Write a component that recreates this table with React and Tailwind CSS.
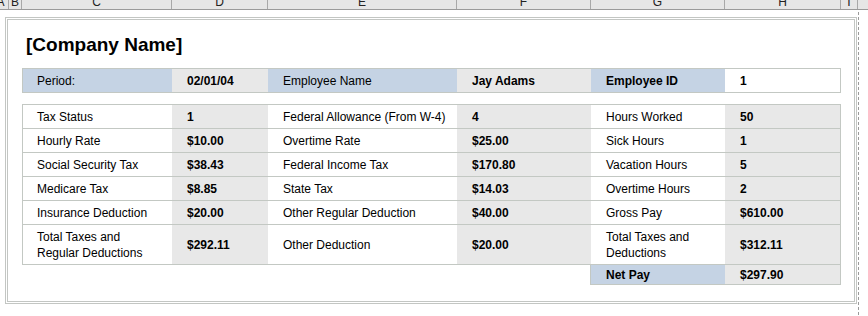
import React from "react";

const headerCols = [
  { l: "A", c: "w-[16px] -ml-[7px]" },
  { l: "B", c: "w-[13px]" },
  { l: "C", c: "w-[150px]" },
  { l: "D", c: "w-[96px]" },
  { l: "E", c: "w-[189px]" },
  { l: "F", c: "w-[134px]" },
  { l: "G", c: "w-[134px]" },
  { l: "H", c: "w-[116px]" },
  { l: "I", c: "w-[17px]" },
  { l: "", c: "flex-1 border-r-0" },
];

const BLUE = "bg-[#c5d3e4]";
const GRAY = "bg-[#e8e8e8]";
const WHITE = "bg-white";

const rows = [
  ["Tax Status", "1", "Federal Allowance (From W-4)", "4", "Hours Worked", "50"],
  ["Hourly Rate", "$10.00", "Overtime Rate", "$25.00", "Sick Hours", "1"],
  ["Social Security Tax", "$38.43", "Federal Income Tax", "$170.80", "Vacation Hours", "5"],
  ["Medicare Tax", "$8.85", "State Tax", "$14.03", "Overtime Hours", "2"],
  ["Insurance Deduction", "$20.00", "Other Regular Deduction", "$40.00", "Gross Pay", "$610.00"],
];

const widths = ["w-[149px]", "w-[96px]", "w-[189px]", "w-[134px]", "w-[134px]", "w-[115px]"];

function Cell({ w, bg, bold, first, children }) {
  return (
    <div
      className={`${w} ${bg} flex items-center ${first ? "pl-[14px]" : "pl-[15px]"} leading-[16px] ${
        bold ? "font-bold" : ""
      }`}
    >
      {children}
    </div>
  );
}

export default function App() {
  return (
    <div className="relative w-[868px] h-[316px] bg-white overflow-hidden font-['Liberation_Sans',Arial,sans-serif] text-[12px] text-black">
      {/* spreadsheet column header */}
      <div className="flex h-[10px] bg-[#e6e6e6] border-b border-[#9a9a9a] overflow-hidden">
        {headerCols.map((c, i) => (
          <div
            key={i}
            className={`${c.c} shrink-0 border-r border-[#a8a8a8] text-center text-[12px] leading-[12px] -mt-[4px] text-[#222]`}
          >
            {c.l}
          </div>
        ))}
      </div>

      {/* page frame */}
      <div className="ml-[5px] mt-[7px] w-[852px] h-[287px] border-[3px] border-double border-[#c3c6c3]">
        <div className="pl-[14px] pt-[13px]">
          <div className="h-[24px] leading-[24px] text-[19px] font-bold pl-[4px]">
            [Company Name]
          </div>

          {/* period row */}
          <div className="mt-[11px] flex w-[819px] h-[25px] border border-[#c3c8c3]">
            <Cell w={widths[0]} bg={BLUE} first>Period:</Cell>
            <Cell w={widths[1]} bg={GRAY} bold>02/01/04</Cell>
            <Cell w={widths[2]} bg={BLUE}>Employee Name</Cell>
            <Cell w={widths[3]} bg={GRAY} bold>Jay Adams</Cell>
            <Cell w={widths[4]} bg={BLUE} bold>Employee ID</Cell>
            <Cell w={widths[5]} bg={WHITE} bold>1</Cell>
          </div>

          {/* body table */}
          <div className="mt-[11px] w-[819px] border border-[#c3c8c3] flex flex-col divide-y divide-[#c3c8c3]">
            {rows.map((r, i) => (
              <div key={i} className="flex h-[24px]">
                <Cell w={widths[0]} bg={WHITE} first>{r[0]}</Cell>
                <Cell w={widths[1]} bg={GRAY} bold>{r[1]}</Cell>
                <Cell w={widths[2]} bg={WHITE}>{r[2]}</Cell>
                <Cell w={widths[3]} bg={GRAY} bold>{r[3]}</Cell>
                <Cell w={widths[4]} bg={WHITE}>{r[4]}</Cell>
                <Cell w={widths[5]} bg={GRAY} bold>{r[5]}</Cell>
              </div>
            ))}
            <div className="flex h-[39px]">
              <Cell w={widths[0]} bg={WHITE} first>
                <span>
                  Total Taxes and
                  <br />
                  Regular Deductions
                </span>
              </Cell>
              <Cell w={widths[1]} bg={GRAY} bold>$292.11</Cell>
              <Cell w={widths[2]} bg={WHITE}>Other Deduction</Cell>
              <Cell w={widths[3]} bg={GRAY} bold>$20.00</Cell>
              <Cell w={widths[4]} bg={WHITE}>
                <span>
                  Total Taxes and
                  <br />
                  Deductions
                </span>
              </Cell>
              <Cell w={widths[5]} bg={GRAY} bold>$312.11</Cell>
            </div>
          </div>

          {/* net pay */}
          <div className="ml-[568px] flex w-[251px] h-[20px] border border-t-0 border-[#c3c8c3]">
            <Cell w={widths[4]} bg={BLUE} bold>Net Pay</Cell>
            <Cell w={widths[5]} bg={GRAY} bold>$297.90</Cell>
          </div>
        </div>
      </div>

      {/* page break line */}
      <div className="absolute left-[858px] top-[12px] bottom-0 w-[1px] bg-[repeating-linear-gradient(to_bottom,#9a9a9a_0_3px,transparent_3px_5px)]" />
    </div>
  );
}
